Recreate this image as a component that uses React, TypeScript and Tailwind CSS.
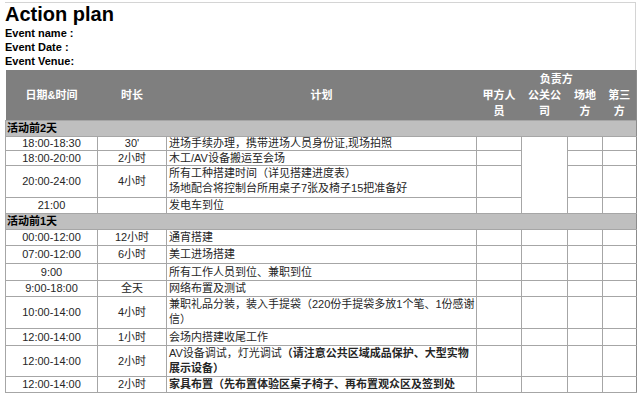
import React from 'react';

type Row = { time: string; dur: string; plan: React.ReactNode; h: number; two?: boolean };

const cell = 'border border-[#a6a6a6] p-0 align-middle overflow-hidden';

const day2: Row[] = [
  { time: '18:00-18:30', dur: "30'", plan: '进场手续办理，携带进场人员身份证,现场拍照', h: 14 },
  { time: '18:00-20:00', dur: '2小时', plan: '木工/AV设备搬运至会场', h: 15 },
  {
    time: '20:00-24:00', dur: '4小时', h: 32, two: true,
    plan: <>所有工种搭建时间（详见搭建进度表）<br />场地配合将控制台所用桌子7张及椅子15把准备好</>,
  },
  { time: '21:00', dur: '', plan: '发电车到位', h: 16 },
];

const day1: Row[] = [
  { time: '00:00-12:00', dur: '12小时', plan: '通宵搭建', h: 16 },
  { time: '07:00-12:00', dur: '6小时', plan: '美工进场搭建', h: 18 },
  { time: '9:00', dur: '', plan: '所有工作人员到位、兼职到位', h: 17 },
  { time: '9:00-18:00', dur: '全天', plan: '网络布置及测试', h: 16 },
  {
    time: '10:00-14:00', dur: '4小时', h: 32, two: true,
    plan: <>兼职礼品分装，装入手提袋（220份手提袋多放1个笔、1份感谢<br />信）</>,
  },
  { time: '12:00-14:00', dur: '1小时', plan: '会场内搭建收尾工作', h: 17 },
  {
    time: '12:00-14:00', dur: '2小时', h: 31, two: true,
    plan: <>AV设备调试，灯光调试<b>（请注意公共区域成品保护、大型实物<br />展示设备）</b></>,
  },
  { time: '12:00-14:00', dur: '2小时', plan: <b>家具布置（先布置体验区桌子椅子、再布置观众区及签到处</b>, h: 16 },
];

const Section = ({ title }: { title: string }) => (
  <tr className="h-[16px] bg-[#bfbfbf]">
    <td colSpan={7} className="border border-[#a6a6a6] border-r-[#8c8c8c] px-[1px] py-0 text-left font-bold text-black leading-[12px]">{title}</td>
  </tr>
);

const DataRow = ({ r, merged }: { r: Row; merged?: boolean | 'skip' }) => (
  <tr style={{ height: r.h }}>
    <td className={`${cell} text-center`}>{r.time}</td>
    <td className={`${cell} text-center`}>{r.dur}</td>
    <td className={`${cell} pl-[2px] text-left whitespace-nowrap ${r.two ? 'leading-[15px]' : ''}`}>{r.plan}</td>
    <td className={cell}></td>
    {merged === true && <td rowSpan={4} className={cell}></td>}
    {!merged && <td className={cell}></td>}
    <td className={cell}></td>
    <td className={`${cell} border-r-[#8c8c8c]`}></td>
  </tr>
);

export default function App() {
  return (
    <div className="w-[641px] h-[393px] bg-white overflow-hidden font-['Liberation_Sans','Noto_Sans_CJK_SC',sans-serif] text-[#262626]">
      <div className="ml-[5px] mt-[2px] w-[631px]">
        {/* 表头上面的标题区 */}
        <div className="border-t border-r border-[#d4d4d4] h-[68px] text-black">
          <div className="text-[20px] leading-[23px] font-bold">Action plan</div>
          <div className="text-[11px] leading-[14px] font-bold">Event name :</div>
          <div className="text-[11px] leading-[14px] font-bold">Event Date :</div>
          <div className="text-[11px] leading-[14px] font-bold">Event Venue:</div>
        </div>

        <table className="table-fixed border-collapse w-[631px] text-[11px] leading-[12px]">
          <colgroup>
            <col className="w-[92px]" />
            <col className="w-[69px]" />
            <col className="w-[310px]" />
            <col className="w-[45px]" />
            <col className="w-[46px]" />
            <col className="w-[35px]" />
            <col className="w-[34px]" />
          </colgroup>
          <thead className="bg-[#7f7f7f] text-white font-bold leading-[16px]">
            <tr className="h-[16px]">
              <th rowSpan={2} className="p-0 font-bold">日期&amp;时间</th>
              <th rowSpan={2} className="p-0 font-bold">时长</th>
              <th rowSpan={2} className="p-0 font-bold">计划</th>
              <th colSpan={4} className="p-0 pt-[1px] font-bold align-bottom border-r border-[#8c8c8c]">负责方</th>
            </tr>
            <tr className="h-[33px]">
              <th className="p-0 font-bold">甲方人<br />员</th>
              <th className="p-0 font-bold">公关公<br />司</th>
              <th className="p-0 font-bold">场地<br />方</th>
              <th className="p-0 font-bold border-r border-[#8c8c8c]">第三<br />方</th>
            </tr>
          </thead>
          <tbody>
            <Section title="活动前2天" />
            {day2.map((r, i) => (
              <DataRow key={'a' + i} r={r} merged={i === 0 ? true : 'skip'} />
            ))}
            <Section title="活动前1天" />
            {day1.map((r, i) => (
              <DataRow key={'b' + i} r={r} />
            ))}
          </tbody>
        </table>
      </div>
    </div>
  );
}
